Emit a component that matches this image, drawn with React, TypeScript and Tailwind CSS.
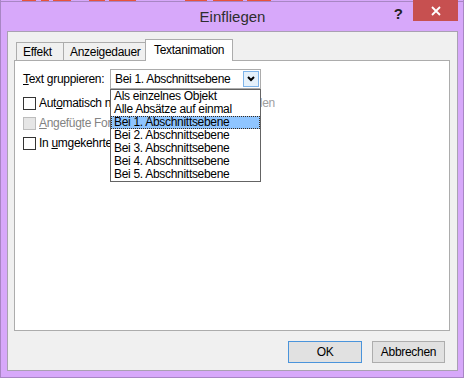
import React from "react";

const font = { fontFamily: '"Liberation Sans", Arial, sans-serif' };

function Check({ disabled, children }: { disabled?: boolean; children: React.ReactNode }) {
  return (
    <div className="flex h-[20px] items-center">
      <div
        className={
          disabled
            ? "h-[13px] w-[13px] shrink-0 border border-[#bcbcbc] bg-[#e6e6e6]"
            : "h-[13px] w-[13px] shrink-0 border border-[#333333] bg-white"
        }
      />
      <div className={disabled ? "ml-[3px] text-[#838383]" : "ml-[3px] text-black"}>{children}</div>
    </div>
  );
}

const items = [
  "Als einzelnes Objekt",
  "Alle Absätze auf einmal",
  "Bei 1. Abschnittsebene",
  "Bei 2. Abschnittsebene",
  "Bei 3. Abschnittsebene",
  "Bei 4. Abschnittsebene",
  "Bei 5. Abschnittsebene",
];

export default function App() {
  return (
    <div
      className="relative flex h-[378px] w-[464px] flex-col overflow-hidden border-x border-b border-[#a886c4] bg-[#d7a8fa] text-[12px] leading-[14px] tracking-[-0.3px]"
      style={font}
    >
      {/* background window peeking at the top */}
      <div className="relative h-px">
        <div className="absolute left-[21px] top-0 h-px w-[14px] bg-[#e9533a]" />
        <div className="absolute left-[40px] top-0 h-px w-[8px] bg-[#e9533a]" />
        <div className="absolute left-[52px] top-0 h-px w-[18px] bg-[#e9533a]" />
        <div className="absolute left-[88px] top-0 h-px w-[16px] bg-[#e9533a]" />
        <div className="absolute left-[108px] top-0 h-px w-[27px] bg-[#e9533a]" />
        <div className="absolute left-[184px] top-0 h-px w-[22px] bg-[#e9533a]" />
        <div className="absolute left-[212px] top-0 h-px w-[30px] bg-[#e9533a]" />
        <div className="absolute left-[246px] top-0 h-px w-[24px] bg-[#e9533a]" />
      </div>
      <div className="flex flex-1 flex-col border-t border-[#a886c4] pb-[6px] pl-[6px] pr-[5px]">
        {/* title bar */}
        <div className="relative flex h-[29px] items-center justify-center">
          <span className="text-[15px] tracking-normal text-[#2e2e2e]">Einfliegen</span>
          <span className="absolute right-[55px] top-[4px] text-[15px] font-bold leading-[16px] tracking-normal text-[#222]">?</span>
          <div className="absolute right-[0px] top-[-2px] flex h-[21px] w-[45px] items-center justify-center bg-[#c75050]">
            <svg width="10" height="10" viewBox="0 0 10 10">
              <path d="M1 1 L9 9 M9 1 L1 9" stroke="white" strokeWidth="1.8" />
            </svg>
          </div>
        </div>

        {/* client area */}
        <div className="flex h-[340px] flex-col border border-[#a9a0b2] bg-[#f0f0f0] px-[6px] pb-[7px] pt-[7px]">
          {/* tabs */}
          <div className="relative z-10 flex h-[21px] items-end pl-[2px]">
            <div className="flex h-[18px] w-[48px] items-center border-l border-r border-t border-[#acacac] bg-[#f0f0f0] pl-[6px]">
              Effekt
            </div>
            <div className="flex h-[18px] w-[82px] items-center border-r border-t border-[#acacac] bg-[#f0f0f0] pl-[6px]">
              Anzeigedauer
            </div>
            <div className="-mb-px -ml-px flex h-[22px] w-[88px] items-start border-l border-r border-t border-[#acacac] bg-white pl-[8px] pt-[3px]">
              Textanimation
            </div>
          </div>

          {/* panel */}
          <div className="relative h-[271px] w-[436px] border border-[#acacac] bg-white pl-[8px] pt-[8px]">
            <div className="flex h-[20px] items-center">
              <div className="w-[87px]">
                <span className="underline">T</span>ext gruppieren:
              </div>
              <div className="flex h-[20px] w-[151px] items-center border border-[#acacac] bg-white pl-[4px]">
                <span className="flex-1">Bei 1. Abschnittsebene</span>
                <div className="mr-px flex h-[16px] w-[16px] items-center justify-center border border-[#7eb4ea] bg-[#e5f1fb]">
                  <svg width="8" height="6" viewBox="0 0 8 6">
                    <path d="M1 1 L4 4 L7 1" stroke="black" strokeWidth="2" fill="none" />
                  </svg>
                </div>
              </div>
            </div>

            <div className="mt-[4px] flex flex-col">
              <Check>
                <div className="flex items-center">
                  <div className="w-[71px] overflow-hidden whitespace-nowrap">
                    Aut<span className="underline">o</span>matisch nach
                  </div>
                  <div className="ml-[151px] flex w-[14px] justify-end overflow-hidden whitespace-nowrap text-[#a0a0a0]">
                    Sekunden
                  </div>
                </div>
              </Check>
              <Check disabled>
                <div className="w-[71px] overflow-hidden whitespace-nowrap">
                  <span className="underline">A</span>ngefügte Form animieren
                </div>
              </Check>
              <Check>
                <div className="w-[71px] overflow-hidden whitespace-nowrap">
                  In <span className="underline">u</span>mgekehrter Reihenfolge
                </div>
              </Check>
            </div>

            {/* open dropdown list */}
            <div className="absolute left-[95px] top-[28px] z-20 w-[151px] border border-[#646464] bg-white">
              {items.map((t, i) => (
                <div
                  key={t}
                  className={
                    i === 2
                      ? "flex h-[13px] items-center border border-dotted border-[#3a2a1a] bg-[#8fc5ff] pl-[2px] leading-[11px]"
                      : "flex h-[13px] items-center pl-[3px] leading-[13px]"
                  }
                >
                  {t}
                </div>
              ))}
            </div>
          </div>

          {/* buttons */}
          <div className="mt-[10px] flex h-[22px] justify-end gap-[10px] pr-[6px]">
            <div className="flex h-[22px] w-[74px] items-center justify-center border border-[#4a94db] bg-[#e1e1e1]">
              OK
            </div>
            <div className="flex h-[22px] w-[73px] items-center justify-center border border-[#adadad] bg-[#e1e1e1]">
              Abbrechen
            </div>
          </div>
        </div>
      </div>
    </div>
  );
}
